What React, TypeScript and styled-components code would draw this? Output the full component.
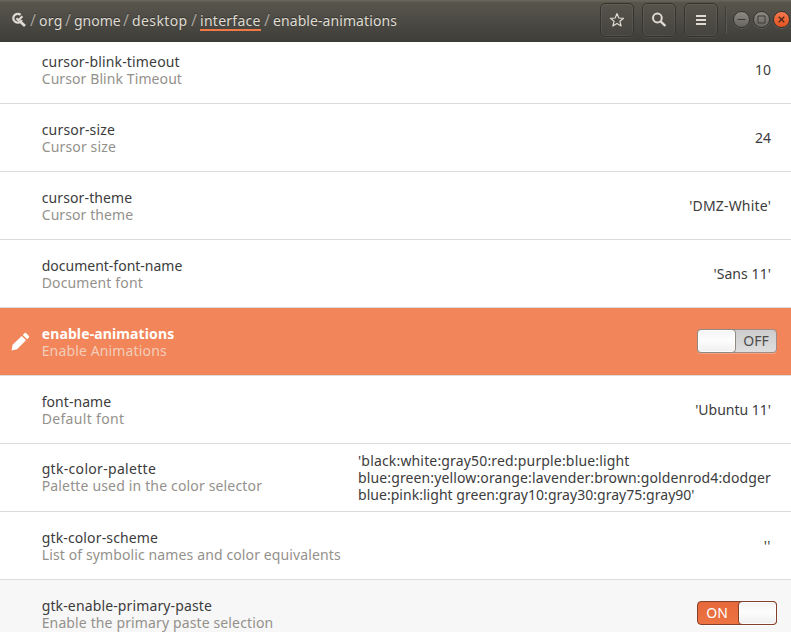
import React from "react";
import styled, { createGlobalStyle, css } from "styled-components";

const GlobalStyle = createGlobalStyle`
  *, *::before, *::after { box-sizing: border-box; }
  body {
    margin: 0;
    background: #fff;
    overflow: hidden;
    font: 14px/17px "Noto Sans", "Open Sans", sans-serif;
    color: #3c3c3c;
  }
`;

const Window = styled.main`
  display: flex;
  flex-direction: column;
  width: 791px;
  height: 632px;
  overflow: hidden;
`;

const HeaderBar = styled.header`
  flex: none;
  display: flex;
  height: 42px;
  padding: 0 1px 0 11px;
  color: #dfdbd2;
  background: linear-gradient(#59574b 0%, #504e47 35%, #3e3d39 100%);
  box-shadow: inset 0 1px #66645a, inset 0 2px #615f53, inset 0 -1px #3b3a36;
`;

const PathIcon = styled.svg`
  flex: none;
  width: 16px;
  height: 16px;
  margin-top: 12px;
`;

const PathBar = styled.nav`
  display: flex;
  flex: 1;
  padding-top: 12px;
  text-shadow: 0 -1px rgba(0, 0, 0, 0.35);
`;

const Slash = styled.span`
  width: 12px;
  text-align: center;
  font-size: 16px;
  color: #a5a299;
`;

const Crumb = styled.span<{ $width: number; $tracking: number; $active?: boolean }>`
  width: ${(p) => p.$width}px;
  height: 19px;
  white-space: nowrap;
  letter-spacing: ${(p) => p.$tracking}px;
  ${(p) => p.$active && css`border-bottom: 2px solid #f07746;`}
`;

const Tools = styled.div`
  display: flex;
  gap: 8px;
  padding-top: 3px;
`;

const ToolButton = styled.button`
  display: grid;
  place-items: center;
  width: 34px;
  height: 34px;
  padding: 0;
  border: 1px solid #35342f;
  border-radius: 5px;
  color: #dfdbd2;
  background: linear-gradient(#56544b, #45443e);
  box-shadow: inset 0 0 0 1px rgba(255, 255, 255, 0.06), 0 1px rgba(255, 255, 255, 0.06);
`;

const Separator = styled.div`
  width: 2px;
  height: 28px;
  margin: 6px 6px 0 7px;
  border-left: 1px solid #3f3e38;
  border-right: 1px solid #5a584f;
`;

const WindowControls = styled.div`
  display: flex;
  gap: 3px;
  padding-top: 11px;
`;

const ControlButton = styled.button<{ $close?: boolean }>`
  display: grid;
  place-items: center;
  width: 17px;
  height: 17px;
  padding: 0;
  border: 1px solid #34332e;
  border-radius: 50%;
  color: ${(p) => (p.$close ? "#4b2618" : "#3b3a35")};
  background: ${(p) =>
    p.$close ? "linear-gradient(#f4794e, #e2531f)" : "linear-gradient(#8c8a82, #66645d)"};
  box-shadow: 0 1px rgba(255, 255, 255, 0.12);
`;

const Viewport = styled.section`
  flex: 1;
  overflow: hidden;
`;

const KeyList = styled.ul`
  list-style: none;
  margin: -6px 0 0;
  padding: 0;
`;

const TextLine = styled.div<{ $t: number }>`
  height: 17px;
  letter-spacing: ${(p) => p.$t}px;
  white-space: nowrap;
`;

const KeyName = styled(TextLine)``;

const Summary = styled(TextLine)`
  color: #94918c;
`;

const Row = styled.li<{ $selected?: boolean; $shaded?: boolean }>`
  display: flex;
  align-items: center;
  height: 68px;
  padding-right: 20px;
  border-bottom: 1px solid #dcdcdc;
  background: ${(p) => (p.$selected ? "#f28559" : p.$shaded ? "#f7f7f7" : "#fff")};
  ${(p) =>
    p.$selected &&
    css`
      ${KeyName} { color: #fff; font-weight: 700; }
      ${Summary} { color: #f3cdb9; }
    `}
`;

const IconCell = styled.div`
  flex: none;
  display: flex;
  width: 41.7px;
  padding-left: 11px;
`;

const Labels = styled.div<{ $raised?: boolean }>`
  flex: 1;
  padding: ${(p) => (p.$raised ? "0 0 1px" : "1px 0 0")};
`;

const Value = styled.div`
  display: flex;
  flex-direction: column;
`;

const Switch = styled.div<{ $on?: boolean }>`
  display: flex;
  flex-direction: ${(p) => (p.$on ? "row-reverse" : "row")};
  width: 80px;
  height: 24px;
  margin: 0 -6px 1px 0;
  border: 1px solid ${(p) => (p.$on ? "#83402a" : "#a08c83")};
  border-radius: 4px;
  color: ${(p) => (p.$on ? "#fff" : "#4c4c4c")};
  background: ${(p) =>
    p.$on ? "linear-gradient(#e5683a, #ed7442)" : "linear-gradient(#cdcdcd, #dedede)"};
  box-shadow: ${(p) => (p.$on ? "0 1px #fff" : "0 1px rgba(255,255,255,.25)")};
`;

const Knob = styled.div<{ $on?: boolean }>`
  flex: none;
  width: 39px;
  height: 24px;
  margin: -1px;
  border: 1px solid ${(p) => (p.$on ? "#83402a" : "#8f8984")};
  border-radius: 4px;
  background: linear-gradient(#f3f3f3, #fdfdfd 45%, #efefef);
  box-shadow: inset 0 0 0 1px rgba(255, 255, 255, 0.8);
`;

const SwitchText = styled.span<{ $on?: boolean }>`
  flex: 1;
  padding: ${(p) => (p.$on ? "2px 3px 0 0" : "2px 0 0 1px")};
  text-align: center;
`;

type Text = [string, number];

interface KeyEntry {
  name: Text;
  summary: Text;
  value?: Text[];
  toggle?: boolean;
  selected?: boolean;
  shaded?: boolean;
}

const keys: KeyEntry[] = [
  { name: ["cursor-blink-timeout", 0.16], summary: ["Cursor Blink Timeout", 0.09], value: [["10", 0]] },
  { name: ["cursor-size", 0.18], summary: ["Cursor size", 0.15], value: [["24", 0]] },
  { name: ["cursor-theme", 0.12], summary: ["Cursor theme", 0.09], value: [["'DMZ-White'", 0.18]] },
  { name: ["document-font-name", 0], summary: ["Document font", 0.14], value: [["'Sans 11'", 0.08]] },
  { name: ["enable-animations", 0.12], summary: ["Enable Animations", 0.14], toggle: false, selected: true },
  { name: ["font-name", 0.06], summary: ["Default font", 0.32], value: [["'Ubuntu 11'", 0]] },
  {
    name: ["gtk-color-palette", 0.31],
    summary: ["Palette used in the color selector", 0.16],
    value: [
      ["'black:white:gray50:red:purple:blue:light", 0.165],
      ["blue:green:yellow:orange:lavender:brown:goldenrod4:dodger", 0.125],
      ["blue:pink:light green:gray10:gray30:gray75:gray90'", 0.03],
    ],
  },
  {
    name: ["gtk-color-scheme", 0.14],
    summary: ["List of symbolic names and color equivalents", 0.12],
    value: [["''", 0.5]],
  },
  {
    name: ["gtk-enable-primary-paste", 0.13],
    summary: ["Enable the primary paste selection", 0.13],
    toggle: true,
    shaded: true,
  },
];

const crumbs: { label: string; width: number; tracking: number; active?: boolean }[] = [
  { label: "org", width: 23, tracking: 0.35 },
  { label: "gnome", width: 46, tracking: 0 },
  { label: "desktop", width: 56, tracking: 0.4 },
  { label: "interface", width: 61, tracking: 0.27, active: true },
  { label: "enable-animations", width: 130, tracking: 0.08 },
];

const Pencil = () => (
  <svg width="19" height="19" viewBox="0 0 19 19" fill="#fff">
    <path d="M.6 18.4 1.6 12.8 10.7 4 15 8.3 6 17.2Z" />
    <path d="M11.8 2.9 13.6 1.1Q14.3.5 15 1.1L17.9 4Q18.5 4.8 17.9 5.4L16.1 7.2Z" />
  </svg>
);

const KeyRow = ({ entry }: { entry: KeyEntry }) => (
  <Row $selected={entry.selected} $shaded={entry.shaded}>
    <IconCell>{entry.selected && <Pencil />}</IconCell>
    <Labels $raised={(entry.value?.length ?? 0) > 1}>
      <KeyName $t={entry.name[1]}>{entry.name[0]}</KeyName>
      <Summary $t={entry.summary[1]}>{entry.summary[0]}</Summary>
    </Labels>
    {entry.value && (
      <Value>
        {entry.value.map(([text, t]) => <TextLine key={text} $t={t}>{text}</TextLine>)}
      </Value>
    )}
    {entry.toggle !== undefined && (
      <Switch $on={entry.toggle}>
        <Knob $on={entry.toggle} />
        <SwitchText $on={entry.toggle}>{entry.toggle ? "ON" : "OFF"}</SwitchText>
      </Switch>
    )}
  </Row>
);

export default function App() {
  return (
    <Window>
      <GlobalStyle />
      <HeaderBar>
        <PathIcon viewBox="0 0 16 16" fill="none" stroke="currentColor">
          <path d="M9.6 2.9A4.4 4.4 0 1 0 10.7 8" strokeWidth="2.3" />
          <path d="m5.4 6.2 2 2 4-4" strokeWidth="2.1" />
          <path d="m9.4 9.8 4.6 4.3" strokeWidth="2.8" />
        </PathIcon>
        <PathBar>
          {crumbs.map((c) => (
            <React.Fragment key={c.label}>
              <Slash>/</Slash>
              <Crumb $width={c.width} $tracking={c.tracking} $active={c.active}>{c.label}</Crumb>
            </React.Fragment>
          ))}
        </PathBar>
        <Tools>
          <ToolButton aria-label="Bookmarks">
            <svg width="16" height="16" viewBox="0 0 16 16" fill="none" stroke="currentColor" strokeWidth="1.2" strokeLinejoin="round">
              <path d="M8 1.6 9.8 6 14.6 6.3 10.9 9.2 12.1 14 8 11.4 3.9 14 5.1 9.2 1.4 6.3 6.2 6Z" />
            </svg>
          </ToolButton>
          <ToolButton aria-label="Search">
            <svg width="16" height="16" viewBox="0 0 16 16" fill="none" stroke="currentColor">
              <circle cx="6.4" cy="6" r="4.4" strokeWidth="2" />
              <path d="m9.6 9.3 4.8 4.7" strokeWidth="2.4" />
            </svg>
          </ToolButton>
          <ToolButton aria-label="Menu">
            <svg width="16" height="16" viewBox="0 0 16 16" fill="currentColor">
              <path d="M3 3h10v2H3zM3 7h10v2H3zM3 11h10v2H3z" />
            </svg>
          </ToolButton>
        </Tools>
        <Separator />
        <WindowControls>
          <ControlButton aria-label="Minimize">
            <svg width="15" height="15" viewBox="0 0 15 15"><path d="M3.5 7.5h8" stroke="currentColor" /></svg>
          </ControlButton>
          <ControlButton aria-label="Maximize">
            <svg width="15" height="15" viewBox="0 0 15 15"><path d="M4 4h7v7H4z" fill="none" stroke="currentColor" /></svg>
          </ControlButton>
          <ControlButton $close aria-label="Close">
            <svg width="15" height="15" viewBox="0 0 15 15"><path d="m4.7 4.7 5.6 5.6m0-5.6-5.6 5.6" stroke="currentColor" strokeWidth="1.3" /></svg>
          </ControlButton>
        </WindowControls>
      </HeaderBar>
      <Viewport>
        <KeyList>
          {keys.map((entry) => <KeyRow key={entry.name[0]} entry={entry} />)}
        </KeyList>
      </Viewport>
    </Window>
  );
}
